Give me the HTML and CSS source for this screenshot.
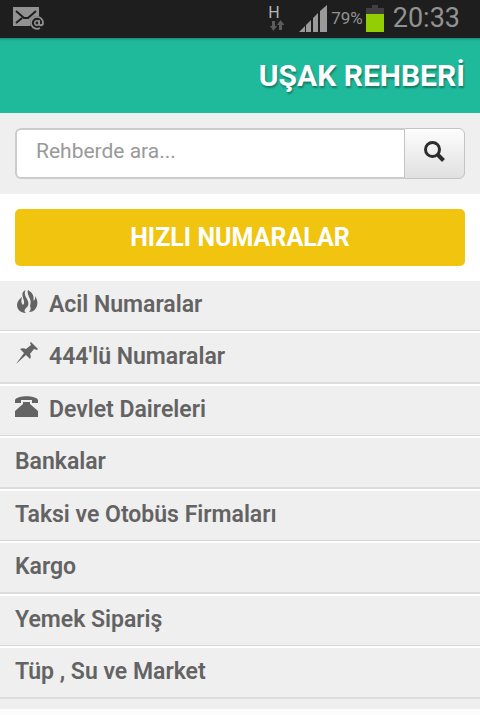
FILE: index.html
```html
<!DOCTYPE html>
<html lang="tr">
<head>
  <meta charset="UTF-8">
  <meta name="viewport" content="width=device-width, initial-scale=1.0">
  <title>Uşak Rehberi</title>
  <link rel="stylesheet" href="styles.css">
</head>
<body>
  <div class="statusbar">
    <svg class="mail" width="31" height="23" viewBox="0 0 31 23">
      <rect width="26" height="19" fill="#929292"/>
      <path d="M3 4l8 7h4l8-7M3 16l6-5" fill="none" stroke="#1e1e1e" stroke-width="2"/>
      <circle cx="24" cy="16" r="7" fill="#1e1e1e"/>
      <path d="M27 21a6 6 0 1 1 3-5c0 3-4 3-4 0v-3" fill="none" stroke="#929292" stroke-width="1.8"/>
      <circle cx="24" cy="16" r="2.2" fill="none" stroke="#929292" stroke-width="1.6"/>
    </svg>
    <div class="network">
      <span>H</span>
      <svg width="17" height="11" viewBox="0 0 17 11" fill="#5c5c5c">
        <path d="M4 1h3v5h2l-3.500 5L2 6h2z"/>
        <path d="M11 10h3V5h2.500L12.500 0 9 5h2z"/>
      </svg>
    </div>
    <svg class="signal" width="28" height="27" viewBox="0 0 28 27" fill="#9a9a9a">
      <path d="M0 27l6-6v6zM7 20l5-5v12H7zM14 13l5-5v19h-5zM21 6l7-6v27h-7z"/>
    </svg>
    <span class="percent">79%</span>
    <svg class="battery" width="18" height="27" viewBox="0 0 18 27">
      <path d="M6 0h6v3h6v6H0V3h6z" fill="#404040"/>
      <rect y="9" width="18" height="18" fill="#93ce04"/>
    </svg>
    <span class="clock">20:33</span>
  </div>

  <header class="header">
    <h1>UŞAK REHBERİ</h1>
  </header>

  <form class="search">
    <input type="text" placeholder="Rehberde ara..." aria-label="Rehberde ara">
    <button type="button" aria-label="Ara">
      <svg width="21" height="21" viewBox="0 0 21 21" fill="none" stroke="#2d2d2d">
        <circle cx="8.500" cy="8.500" r="7" stroke-width="3"/>
        <path d="M13.500 13.500l6 6" stroke-width="4"/>
      </svg>
    </button>
  </form>

  <div class="quick">
    <button type="button">HIZLI NUMARALAR</button>
  </div>

  <nav>
    <ul class="list">
      <li><a href="#">
        <svg width="24" height="24" viewBox="0 0 24 24" fill="#636363">
          <path d="M10.500 0C9 3 10 6 12 9c2 4 2 7-1 9-2 2-2 4 0 5-6 0-9-4-9-8 0-3 2-6 5-8-1 4-1 6 1 8 2-2 1-4 0-7-1-4-1-6 2.500-8z"/>
          <path d="M13 0c5 3 6 6 5.500 11 2-2 2-3 1.500-5 3 4 3 9 1 12-2 3-4 4-7 4 2-2 2-4 1-6 1-3 1-6-1-9-1-3-2-5-1-7z"/>
        </svg>
        Acil Numaralar</a></li>
      <li><a href="#">
        <svg width="24" height="24" viewBox="0 0 24 24" fill="#636363">
          <path d="M16 0l7 7-1 1-3-1-4 5c1 2 1 3 0 5l-4-4L1 22l8-11-4-4c2-1 4-1 6 0l5-4-1-2z"/>
        </svg>
        444'lü Numaralar</a></li>
      <li><a href="#">
        <svg width="24" height="24" viewBox="0 0 24 24" fill="#636363">
          <path d="M0 8V5c2-5 21-5 23 0v3h-6V5H6v3z"/>
          <path d="M8 7h7v2l8 7v6H0v-6l8-7z"/>
        </svg>
        Devlet Daireleri</a></li>
      <li><a href="#">Bankalar</a></li>
      <li><a href="#">Taksi ve Otobüs Firmaları</a></li>
      <li><a href="#">Kargo</a></li>
      <li><a href="#">Yemek Sipariş</a></li>
      <li><a href="#">Tüp , Su ve Market</a></li>
    </ul>
  </nav>
</body>
</html>
```
FILE: styles.css
```css
* {
  box-sizing: border-box;
}
body {
  margin: 0;
  background-color: #fcfcfc;
  font-family: Roboto, "Liberation Sans", sans-serif;
}
.statusbar {
  display: flex;
  align-items: center;
  height: 38px;
  padding: 0 20px 2px 13px;
  background-color: #1e1e1e;
  color: #929292;
}
.mail {
  margin-right: auto;
}
.network {
  display: flex;
  flex-direction: column;
  align-items: flex-start;
  margin-right: 14px;
  font-size: 16px;
  line-height: 15px;
  color: #b5b5b5;
}
.percent {
  margin: 0 3px 0 4px;
  font-size: 17px;
}
.clock {
  margin-left: 9px;
  font-size: 27px;
}
.header {
  padding: 20px 15px;
  background-color: #1fba9c;
  box-shadow: inset 0 4px 3px -3px rgba(0, 0, 0, 0.3);
  text-align: right;
}
.header h1 {
  margin: 0;
  font-size: 30px;
  line-height: 35px;
  font-weight: 700;
  color: #fff;
  text-shadow: 1px 2px 2px rgba(0, 0, 0, 0.35);
}
.search {
  display: flex;
  padding: 15px;
  background-color: #efefef;
}
.search input {
  flex: 1;
  min-width: 0;
  height: 51px;
  padding: 0 19px 5px;
  border: 2px solid #ccc;
  border-right: 0;
  border-radius: 6px 0 0 6px;
  background-color: #fff;
  font-family: inherit;
  font-size: 21px;
}
.search input::placeholder {
  color: #999;
  opacity: 1;
}
.search button {
  width: 61px;
  padding: 0 0 4px;
  border: 1px solid #c4c4c4;
  border-radius: 0 6px 6px 0;
  background: linear-gradient(#fdfdfd, #e0e0e0);
}
.search svg {
  vertical-align: middle;
}
.quick {
  padding: 15px;
  background-color: #fff;
}
.quick button {
  display: block;
  width: 100%;
  padding: 13px 0;
  border: 0;
  border-radius: 5px;
  background-color: #f1c40f;
  font-family: inherit;
  font-size: 25px;
  line-height: 31px;
  font-weight: 700;
  color: #fff;
}
.list {
  margin: 0;
  padding: 0 0 10px;
  background-color: #efefef;
  list-style: none;
}
.list li {
  border-bottom: 1px solid #d8d8d8;
}
.list li + li {
  border-top: 2px solid #fff;
}
.list li:nth-child(even) {
  border-bottom: 2px solid #dcdcdc;
}
.list a {
  display: flex;
  gap: 10px;
  padding: 9px 15px 10px;
  font-size: 23px;
  line-height: 30px;
  font-weight: 600;
  color: #636363;
  text-decoration: none;
}
```
